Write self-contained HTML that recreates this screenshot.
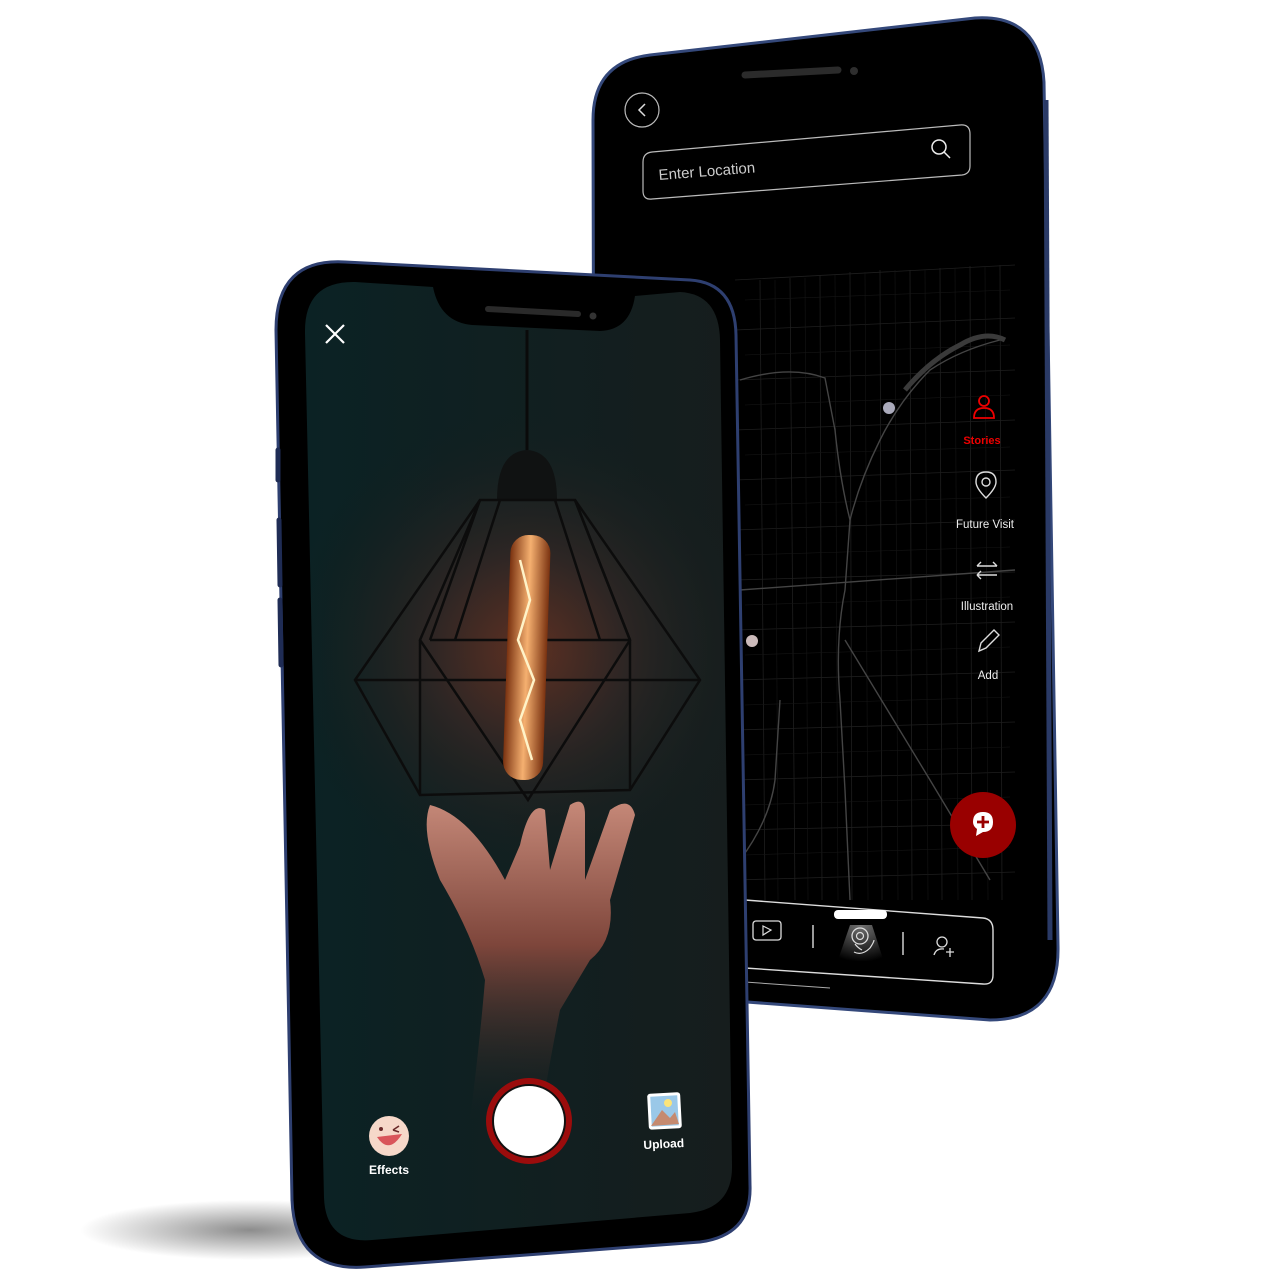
<!DOCTYPE html>
<html><head><meta charset="utf-8"><style>
html,body{margin:0;padding:0;background:#fff;width:1280px;height:1280px;overflow:hidden}
svg{display:block}
text{font-family:"Liberation Sans",sans-serif}
</style></head><body>
<svg width="1280" height="1280" viewBox="0 0 1280 1280" xmlns="http://www.w3.org/2000/svg">
<defs>
<radialGradient id="glow" cx="527" cy="650" r="240" gradientUnits="userSpaceOnUse">
<stop offset="0" stop-color="#5e3022"/><stop offset="0.4" stop-color="#2e2624"/><stop offset="1" stop-color="#121e1e" stop-opacity="0"/>
</radialGradient>
<linearGradient id="scr" x1="0" y1="0" x2="1" y2="0">
<stop offset="0" stop-color="#0b2224"/><stop offset="1" stop-color="#161d1d"/>
</linearGradient>
<radialGradient id="shadow" cx="0.5" cy="0.5" r="0.5">
<stop offset="0" stop-color="#000" stop-opacity="0.45"/><stop offset="1" stop-color="#000" stop-opacity="0"/>
</radialGradient>
<linearGradient id="bulb" x1="0" y1="0" x2="1" y2="0">
<stop offset="0" stop-color="#7a3210"/><stop offset="0.5" stop-color="#f5b070"/><stop offset="1" stop-color="#7a3210"/>
</linearGradient>
<linearGradient id="hand" x1="0" y1="0" x2="0" y2="1">
<stop offset="0" stop-color="#d99482"/><stop offset="0.45" stop-color="#8a4a3e"/><stop offset="1" stop-color="#1e2222" stop-opacity="0"/>
</linearGradient>
<radialGradient id="pillglow" cx="0.5" cy="0" r="1">
<stop offset="0" stop-color="#fff" stop-opacity="0.45"/><stop offset="1" stop-color="#fff" stop-opacity="0"/>
</radialGradient>
</defs>

<ellipse cx="250" cy="1230" rx="170" ry="30" fill="url(#shadow)"/>

<!-- BACK PHONE -->
<path d="M650,55 L975,18 Q1040,14 1044,82 L1058,945 Q1060,1020 990,1020 L720,1000 L595,990 L593,120 Q593,62 650,55 Z" fill="#000" stroke="#34487a" stroke-width="3"/>
<path d="M1046,100 L1050,940" stroke="#2a3a66" stroke-width="5"/>
<path d="M745,75 L838,70" stroke="#2b2b2b" stroke-width="7" stroke-linecap="round"/>
<circle cx="854" cy="71" r="4" fill="#2e2e2e"/>
<circle cx="642" cy="110" r="17" fill="none" stroke="#bbb" stroke-width="1.2"/>
<path d="M645,104 L639,110 L645,116" fill="none" stroke="#ddd" stroke-width="1.5"/>
<path d="M652,152 L960,125 Q970,124 970,134 L970,166 Q970,174 962,175 L652,199 Q643,200 643,191 L643,162 Q643,153 652,152 Z" fill="none" stroke="#bbb" stroke-width="1.2"/>
<text x="659" y="180" font-size="15" fill="#ccc" transform="rotate(-4.5 659 180)">Enter Location</text>
<circle cx="939" cy="147" r="7" fill="none" stroke="#eee" stroke-width="1.5"/>
<path d="M944,152 L950,158" stroke="#eee" stroke-width="1.5"/>

<!-- map -->
<g stroke="#1e1e1e" stroke-width="0.8" fill="none">
<path d="M735,280 L1015,265 M735,330 L1015,318 M735,380 L1015,370 M735,430 L1015,420 M735,480 L1015,470 M735,530 L1015,520 M735,580 L1015,572 M735,630 L1015,622 M735,680 L1015,672 M735,730 L1015,722 M735,780 L1015,772 M735,830 L960,825 M735,880 L1015,872"/>
<path d="M760,280 L765,900 M790,278 L795,900 M820,275 L822,900 M850,272 L852,900 M880,270 L882,900 M910,270 L912,900 M940,268 L942,900 M970,266 L972,900 M1000,265 L1002,900"/>
</g>
<g stroke="#151515" stroke-width="0.6" fill="none">
<path d="M745,300 L1010,290 M745,355 L1010,345 M745,405 L1010,395 M745,455 L1010,447 M745,505 L1010,497 M745,555 L1010,547 M745,605 L1010,597 M745,655 L1010,647 M745,705 L1010,697 M745,755 L1010,747 M745,805 L1010,797 M745,855 L1010,847"/>
<path d="M775,280 L778,900 M805,278 L808,900 M835,275 L838,900 M865,272 L868,900 M895,270 L898,900 M925,270 L928,900 M955,268 L958,900 M985,266 L988,900"/>
</g>
<g stroke="#444" stroke-width="1.4" fill="none">
<path d="M740,380 Q790,365 825,378 L835,430 Q840,480 850,520 L845,590 Q835,640 840,700 L845,790 L850,900"/>
<path d="M1000,340 Q960,350 930,370 Q900,400 880,440 Q860,480 850,520"/>
<path d="M740,590 L1015,570"/>
<path d="M845,640 L930,780 L990,880"/>
<path d="M740,860 Q770,820 775,780 L780,700"/>
</g>
<path d="M905,390 Q930,360 960,345 Q985,330 1005,340" stroke="#3a3a3a" stroke-width="5" fill="none"/>
<circle cx="889" cy="408" r="6" fill="#aab"/>
<circle cx="752" cy="641" r="6" fill="#cbb"/>

<!-- right menu -->
<circle cx="984" cy="401" r="5" fill="none" stroke="#e00" stroke-width="1.8"/>
<path d="M974,418 Q974,408 984,408 Q994,408 994,418 Z" fill="none" stroke="#e00" stroke-width="1.8"/>
<text x="982" y="444" font-size="11" font-weight="bold" fill="#e00" text-anchor="middle">Stories</text>
<path d="M986,498 Q976,488 976,482 Q976,472 986,472 Q996,472 996,482 Q996,488 986,498 Z" fill="none" stroke="#ddd" stroke-width="1.4"/>
<circle cx="986" cy="482" r="4" fill="none" stroke="#ddd" stroke-width="1.4"/>
<text x="985" y="528" font-size="11.5" fill="#eee" text-anchor="middle">Future Visit</text>
<path d="M977,566 L997,566 M993,562 L997,566 M977,575 L997,575 M981,571 L977,575 M981,579 L977,575 M981,562 L977,566" stroke="#ddd" stroke-width="1.4" fill="none"/>
<text x="987" y="610" font-size="11.5" fill="#eee" text-anchor="middle">Illustration</text>
<path d="M979,651 L981,643 L994,630 L999,635 L986,648 Z" fill="none" stroke="#ddd" stroke-width="1.4"/>
<text x="988" y="679" font-size="11.5" fill="#eee" text-anchor="middle">Add</text>

<circle cx="983" cy="825" r="33" fill="#990000"/>
<path d="M973,822 Q973,812 983,812 Q993,812 993,822 Q993,832 983,832 L976,836 L977,829 Q973,826 973,822 Z" fill="#fff"/>
<path d="M983,816 L983,828 M977,822 L989,822" stroke="#990000" stroke-width="2.8"/>

<path d="M745,900 L983,918 Q993,919 993,930 L993,975 Q993,985 983,984 L745,968" fill="none" stroke="#ddd" stroke-width="1.4"/>
<path d="M745,982 L830,988" stroke="#aaa" stroke-width="1"/>
<path d="M838,960 L850,925 L872,925 L884,962 Z" fill="url(#pillglow)"/>
<rect x="834" y="910" width="53" height="9" rx="4" fill="#fff"/>
<rect x="753" y="921" width="28" height="19" rx="3" fill="none" stroke="#ddd" stroke-width="1.3"/>
<path d="M763,926 L771,930 L763,935 Z" fill="none" stroke="#ddd" stroke-width="1.2"/>
<path d="M813,925 L813,948 M903,932 L903,955" stroke="#ddd" stroke-width="1.4"/>
<circle cx="860" cy="936" r="8" fill="none" stroke="#ddd" stroke-width="1.3"/>
<circle cx="860" cy="936" r="3.5" fill="none" stroke="#ddd" stroke-width="1.2"/>
<path d="M855,944 Q858,948 862,950 M854,952 Q862,956 870,948 Q874,942 874,940" fill="none" stroke="#ddd" stroke-width="1.2"/>
<circle cx="942" cy="942" r="5" fill="none" stroke="#ddd" stroke-width="1.3"/>
<path d="M934,955 Q936,948 944,949 M946,952 L954,952 M950,948 L950,957" fill="none" stroke="#ddd" stroke-width="1.3"/>

<!-- FRONT PHONE -->
<path d="M345,262 L690,280 Q735,283 736,335 L750,1185 Q752,1235 700,1242 L365,1267 Q295,1272 292,1200 L276,330 Q276,258 345,262 Z" fill="#000" stroke="#2e3f70" stroke-width="3"/>
<path d="M278,450 L278,480 M279,520 L280,585 M280,600 L281,665" stroke="#1f2c55" stroke-width="5" stroke-linecap="round"/>
<path d="M355,282 L433,287 Q440,322 472,325 L600,331 Q630,330 635,296 L680,292 Q719,294 720,340 L732,1165 Q733,1208 690,1213 L372,1240 Q326,1244 324,1198 L305,333 Q304,281 355,282 Z" fill="url(#scr)"/>
<clipPath id="sc"><path d="M355,282 L433,287 Q440,322 472,325 L600,331 Q630,330 635,296 L680,292 Q719,294 720,340 L732,1165 Q733,1208 690,1213 L372,1240 Q326,1244 324,1198 L305,333 Q304,281 355,282 Z"/></clipPath>
<g clip-path="url(#sc)">
<rect x="300" y="280" width="440" height="970" fill="url(#glow)"/>
<path d="M527,330 L527,450" stroke="#0a0a0a" stroke-width="3"/>
<path d="M497,500 Q497,452 527,450 Q557,452 557,500 Z" fill="#101212"/>
<g stroke="#0c0c0c" stroke-width="2.5" fill="none">
<path d="M480,500 L575,500 L700,680 L630,790 L420,795 L355,680 Z"/>
<path d="M355,680 L700,680 M430,640 L630,640 M420,640 L420,795 M630,640 L630,790"/>
<path d="M480,500 L420,640 L528,800 L630,640 L575,500"/>
<path d="M480,500 L430,640 M575,500 L630,640 M500,500 L455,640 M555,500 L600,640"/>
</g>
<rect x="507" y="535" width="40" height="245" rx="18" fill="url(#bulb)" transform="rotate(2 527 650)"/>
<path d="M520,560 L530,600 L518,640 L534,680 L520,720 L532,760" stroke="#fff3c8" stroke-width="2.5" fill="none"/>
<path d="M430,805 Q470,815 505,880 L520,845 Q530,800 545,810 L550,870 L570,805 Q585,795 585,815 L585,880 L610,810 Q630,795 635,815 L610,900 Q615,940 590,960 L560,1010 Q550,1060 540,1120 L470,1120 Q480,1040 485,980 Q470,930 440,880 Q420,830 430,805 Z" fill="url(#hand)" opacity="0.9"/>
</g>
<path d="M326,325 L344,343 M344,325 L326,343" stroke="#fff" stroke-width="2.2"/>
<circle cx="389" cy="1136" r="20" fill="#f6d8c9"/>
<path d="M377,1137 Q389,1155 402,1134 Z" fill="#d9555a"/>
<circle cx="381" cy="1129" r="2" fill="#6a2a2a"/>
<path d="M393,1130 L399,1126 M393,1130 L399,1132" stroke="#6a2a2a" stroke-width="1.6"/>
<text x="389" y="1174" font-size="12" font-weight="bold" fill="#fff" text-anchor="middle">Effects</text>
<circle cx="529" cy="1121" r="43" fill="#9b0c0c"/>
<circle cx="529" cy="1121" r="37" fill="#111"/>
<circle cx="529" cy="1121" r="35" fill="#fff"/>
<rect x="648" y="1093" width="33" height="36" rx="3" fill="#fff" transform="rotate(-3 664 1111)"/>
<rect x="651" y="1096" width="27" height="30" fill="#9ac8e8" transform="rotate(-3 664 1111)"/>
<circle cx="668" cy="1103" r="4" fill="#fbe47a"/>
<path d="M651,1126 L662,1110 L670,1118 L675,1112 L679,1124 Z" fill="#c58a70"/>
<text x="664" y="1148" font-size="12" font-weight="bold" fill="#fff" text-anchor="middle" transform="rotate(-3 664 1148)">Upload</text>
<path d="M488,309 L578,314" stroke="#2a2a2a" stroke-width="6" stroke-linecap="round"/>
<circle cx="593" cy="316" r="3.5" fill="#333"/>
</svg>
</body></html>
